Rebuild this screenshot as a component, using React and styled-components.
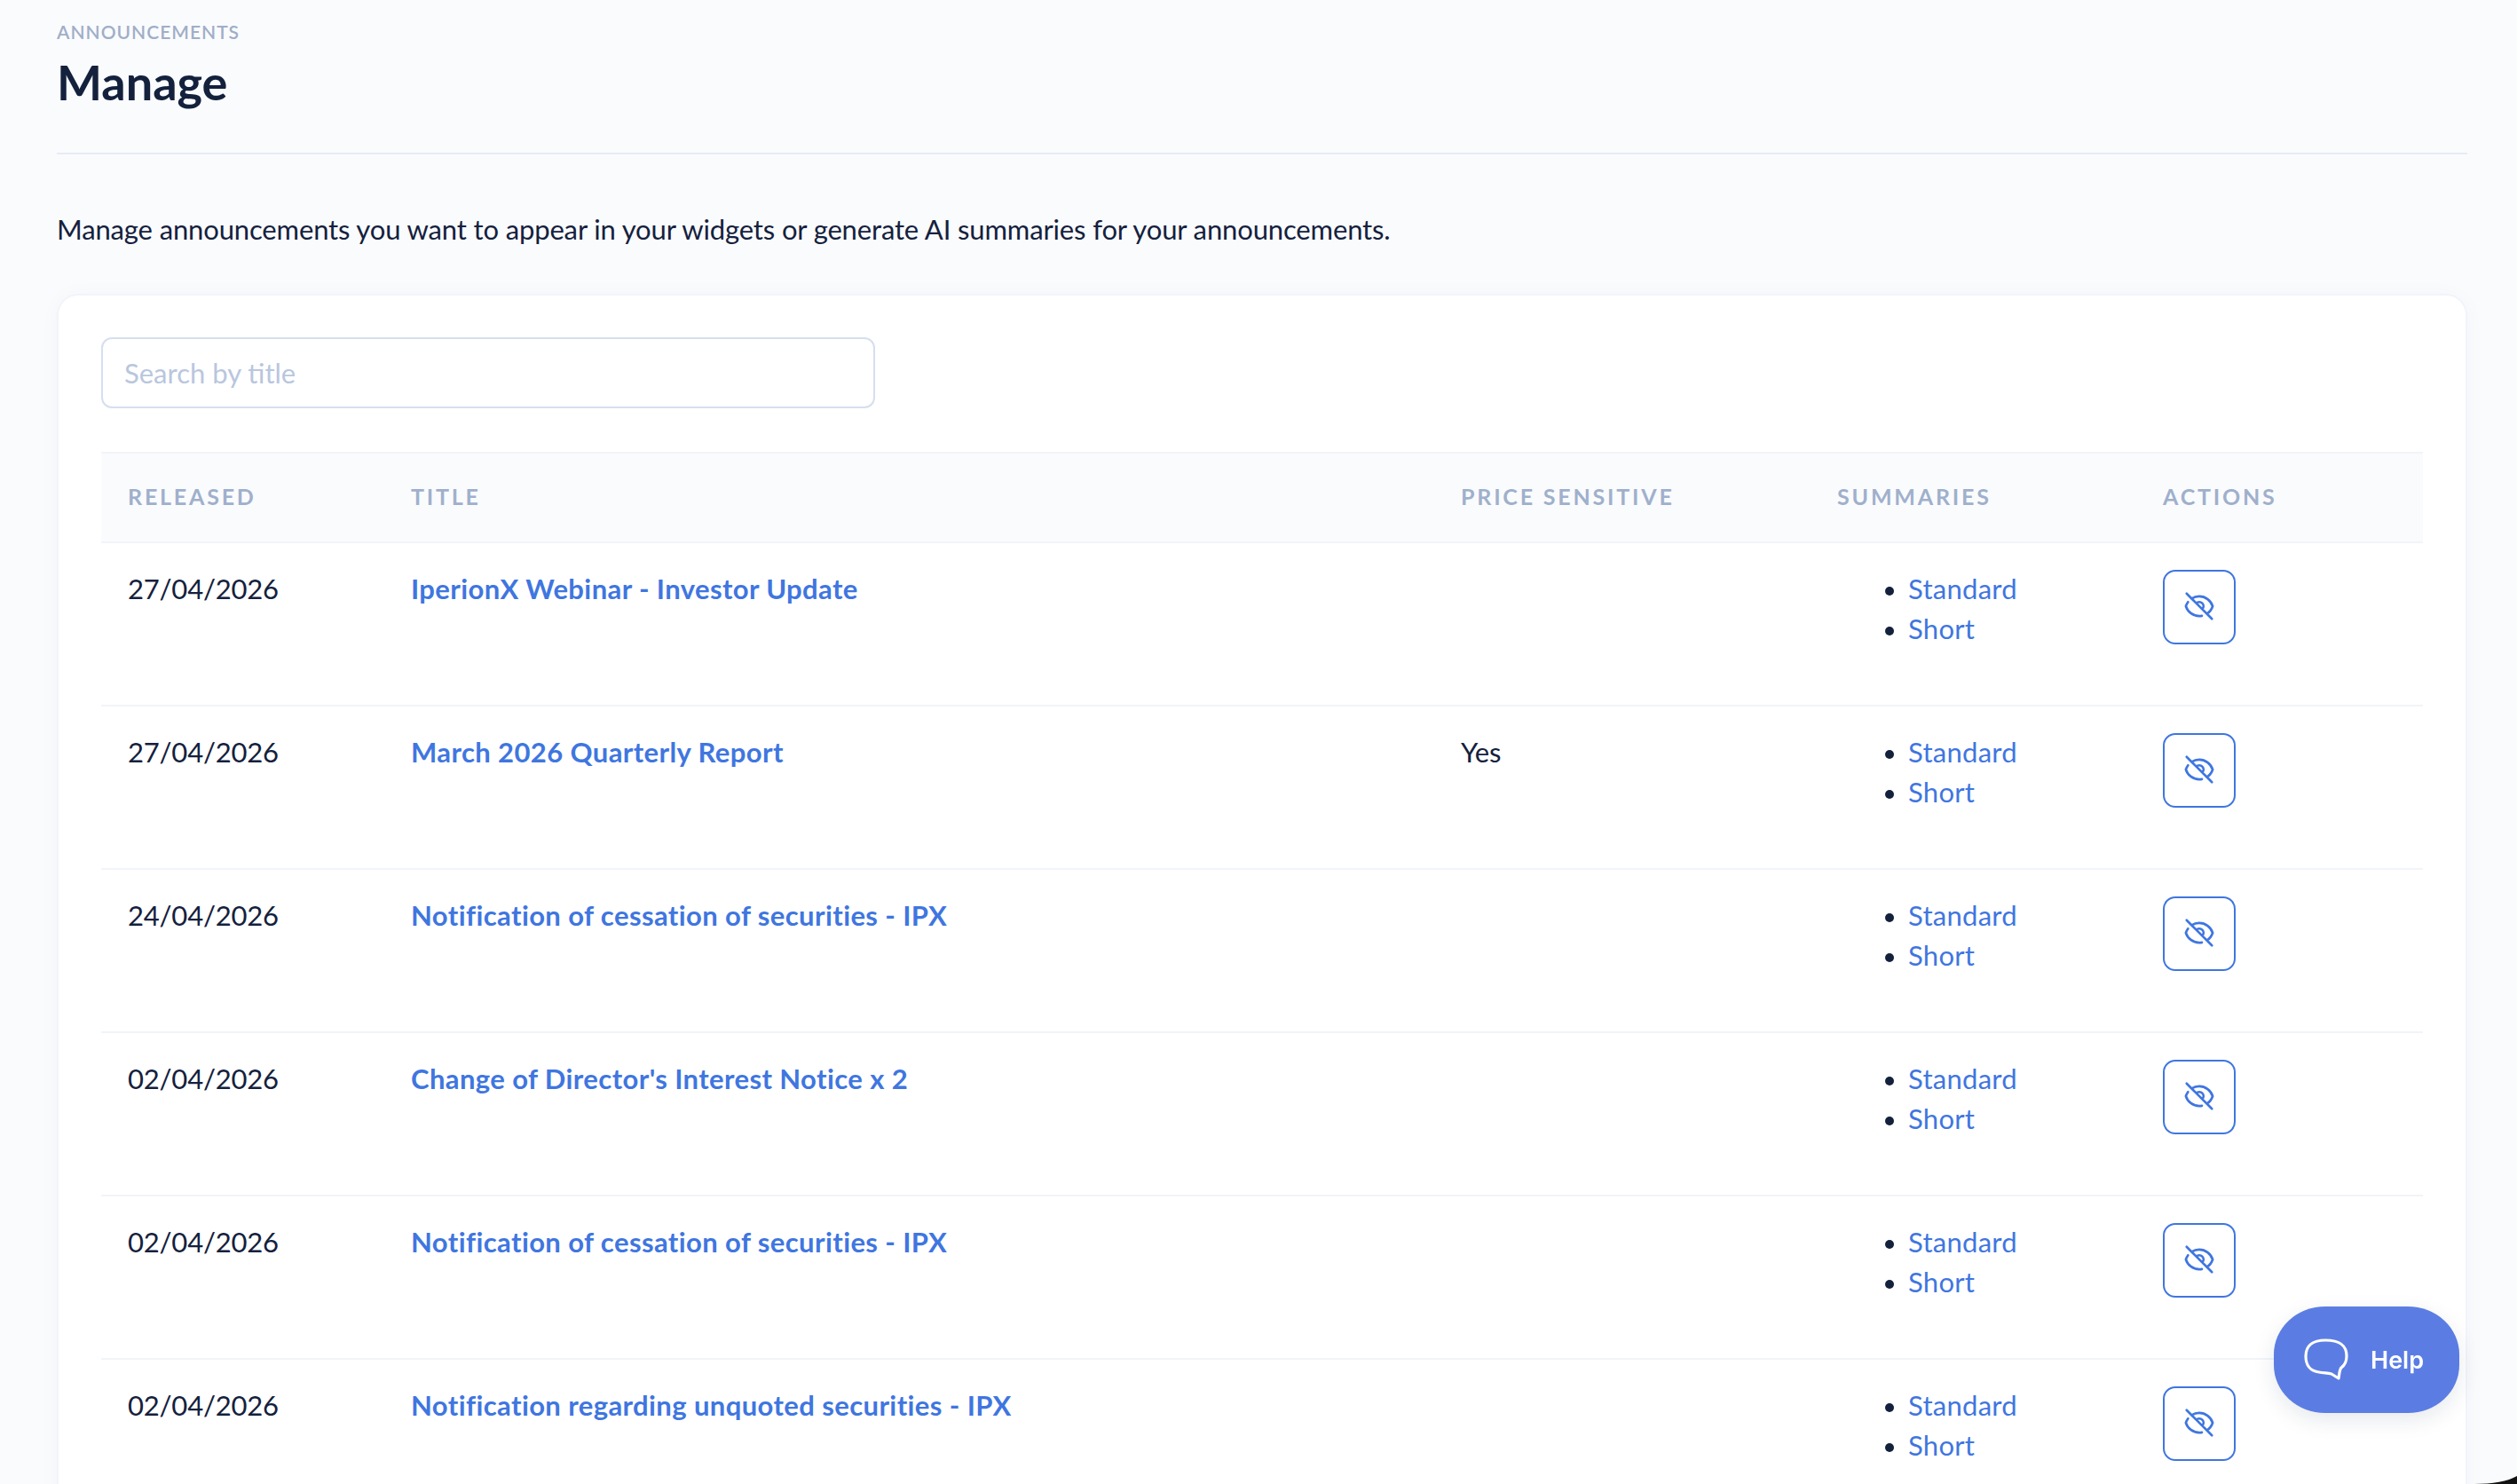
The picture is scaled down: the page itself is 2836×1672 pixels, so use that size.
import React from 'react';
import styled, { createGlobalStyle } from 'styled-components';

const Global = createGlobalStyle`
  html, body { margin: 0; padding: 0; height: 1672px; overflow: hidden; background: #fafbfd; }
  body { font-family: "Lato", "Liberation Sans", sans-serif; color: #14213d; }
  * { box-sizing: border-box; }
`;

const Page = styled.main`
  height: 1672px;
  padding: 24px 56px 0 64px;
  overflow: hidden;
`;
const Eyebrow = styled.div`
  font-size: 21px;
  line-height: 24px;
  font-weight: 600;
  letter-spacing: 1px;
  color: #a0aec8;
  text-transform: uppercase;
`;
const Title = styled.h1`
  margin: 13px 0 0;
  font-size: 54px;
  line-height: 64px;
  font-weight: 700;
  color: #14213d;
`;
const Rule = styled.hr`
  margin: 47px 0 0;
  border: 0;
  height: 2px;
  background: #e6ecf4;
`;
const Intro = styled.p`
  margin: 60px 0 0;
  font-size: 31px;
  line-height: 48px;
  letter-spacing: -0.14px;
  color: #14213d;
`;
const Card = styled.section`
  margin-top: 49px;
  padding: 47px 48px 0;
  background: #fff;
  border: 2px solid #f1f4f9;
  border-radius: 24px;
  box-shadow: 0 2px 24px rgba(20, 40, 80, 0.03);
`;
const Search = styled.input`
  display: block;
  width: 872px;
  height: 80px;
  padding: 0 24px;
  border: 2px solid #d5dfee;
  border-radius: 12px;
  background: #fff;
  font: inherit;
  font-size: 31px;
  &::placeholder { color: #b9c6de; opacity: 1; }
`;
const Table = styled.table`
  width: 100%;
  margin-top: 49px;
  border-collapse: collapse;
  table-layout: fixed;
`;
const HeadRow = styled.tr`
  background: #fafbfd;
  border-top: 2px solid #f1f4f9;
  border-bottom: 2px solid #f1f4f9;
`;
const Th = styled.th`
  width: ${p => p.$w}px;
  height: 101px;
  padding: 0 30px 3px;
  text-align: left;
  font-size: 25px;
  font-weight: 700;
  letter-spacing: 2.8px;
  color: #9fb0cc;
  text-transform: uppercase;
`;
const Row = styled.tr`
  height: 184px;
  border-bottom: 2px solid #f1f4f9;
`;
const Td = styled.td`
  padding: 29px 30px 0;
  vertical-align: top;
  font-size: 31px;
  line-height: 45px;
  letter-spacing: -0.2px;
  color: #14213d;
`;
const TitleLink = styled.a`
  color: #3f76e0;
  font-weight: 700;
  letter-spacing: 0.4px;
  text-decoration: none;
`;
const Summaries = styled.ul`
  margin: 0;
  padding: 0 0 0 54px;
  list-style: none;
`;
const SummaryItem = styled.li`
  display: flex;
  gap: 16px;
  &::before {
    content: "";
    flex: none;
    width: 10px;
    height: 10px;
    margin-top: 20px;
    border-radius: 50%;
    background: #14213d;
  }
`;
const SummaryLink = styled.a`
  color: #3f76e0;
  letter-spacing: 0.27px;
  text-decoration: none;
`;
const ActionCell = styled(Td)`
  padding-top: 30px;
`;
const IconButton = styled.button`
  display: flex;
  align-items: center;
  justify-content: center;
  width: 82px;
  height: 84px;
  padding: 0 0 3px;
  background: #fff;
  border: 2px solid #3f76e0;
  border-radius: 14px;
  color: #3f76e0;
`;
const HelpButton = styled.button`
  position: fixed;
  left: 2562px;
  top: 1472px;
  display: flex;
  align-items: center;
  gap: 25px;
  width: 209px;
  height: 120px;
  padding: 0 0 0 34px;
  border: 0;
  border-radius: 58px / 54px;
  background: #5b7de3;
  box-shadow: 0 8px 24px rgba(20, 40, 80, 0.1);
  color: #fff;
  font-family: "Inter", sans-serif;
  font-size: 27px;
  font-weight: 600;
`;
const Corner = styled.svg`
  position: fixed;
  right: 0;
  bottom: 0;
  display: block;
`;

const EyeOff = () => (
  <svg width="38" height="38" viewBox="0 0 24 24" fill="none" stroke="currentColor" strokeWidth="1.7" strokeLinecap="round" strokeLinejoin="round">
    <path d="M13.875 18.825A10.05 10.05 0 0112 19c-4.478 0-8.268-2.943-9.543-7a9.97 9.97 0 011.563-3.029m5.858.908a3 3 0 114.243 4.243M9.878 9.878l4.242 4.242M9.88 9.88l-3.29-3.29m7.532 7.532l3.29 3.29M3 3l3.59 3.59m0 0A9.953 9.953 0 0112 5c4.478 0 8.268 2.943 9.543 7a10.025 10.025 0 01-4.132 5.411m0 0L21 21" />
  </svg>
);
const Bubble = () => (
  <svg width="50" height="48" viewBox="0 0 50 48" fill="none" stroke="#fff" strokeWidth="3.2" strokeLinejoin="round" strokeLinecap="round">
    <path d="M24 2C40 2 48 7 48 20c0 6-2 10-6 13-2 2-2 6-3 12l-8-5C27 39 22 39 17 38 7 37 2 30 2 20 2 8 10 2 24 2Z" />
  </svg>
);

const rows = [
  ['27/04/2026', 'IperionX Webinar - Investor Update', ''],
  ['27/04/2026', 'March 2026 Quarterly Report', 'Yes'],
  ['24/04/2026', 'Notification of cessation of securities - IPX', ''],
  ['02/04/2026', "Change of Director's Interest Notice x 2", ''],
  ['02/04/2026', 'Notification of cessation of securities - IPX', ''],
  ['02/04/2026', 'Notification regarding unquoted securities - IPX', ''],
];

export default function App() {
  return (
    <Page>
      <Global />
      <Eyebrow>Announcements</Eyebrow>
      <Title>Manage</Title>
      <Rule />
      <Intro>Manage announcements you want to appear in your widgets or generate AI summaries for your announcements.</Intro>
      <Card>
        <Search placeholder="Search by title" />
        <Table>
          <thead>
            <HeadRow>
              <Th $w={319}>Released</Th>
              <Th $w={1183}>Title</Th>
              <Th $w={424}>Price Sensitive</Th>
              <Th $w={367}>Summaries</Th>
              <Th $w={323}>Actions</Th>
            </HeadRow>
          </thead>
          <tbody>
            {rows.map((r, i) => (
              <Row key={i}>
                <Td>{r[0]}</Td>
                <Td><TitleLink href="#">{r[1]}</TitleLink></Td>
                <Td>{r[2]}</Td>
                <Td>
                  <Summaries>
                    <SummaryItem><SummaryLink href="#">Standard</SummaryLink></SummaryItem>
                    <SummaryItem><SummaryLink href="#">Short</SummaryLink></SummaryItem>
                  </Summaries>
                </Td>
                <ActionCell><IconButton aria-label="Hide"><EyeOff /></IconButton></ActionCell>
              </Row>
            ))}
          </tbody>
        </Table>
      </Card>
      <HelpButton><Bubble />Help</HelpButton>
      <Corner width="48" height="9" viewBox="0 0 48 9" aria-hidden="true">
        <path d="M0 9C20 9 38 6 48 0V9Z" fill="#111" />
      </Corner>
    </Page>
  );
}
